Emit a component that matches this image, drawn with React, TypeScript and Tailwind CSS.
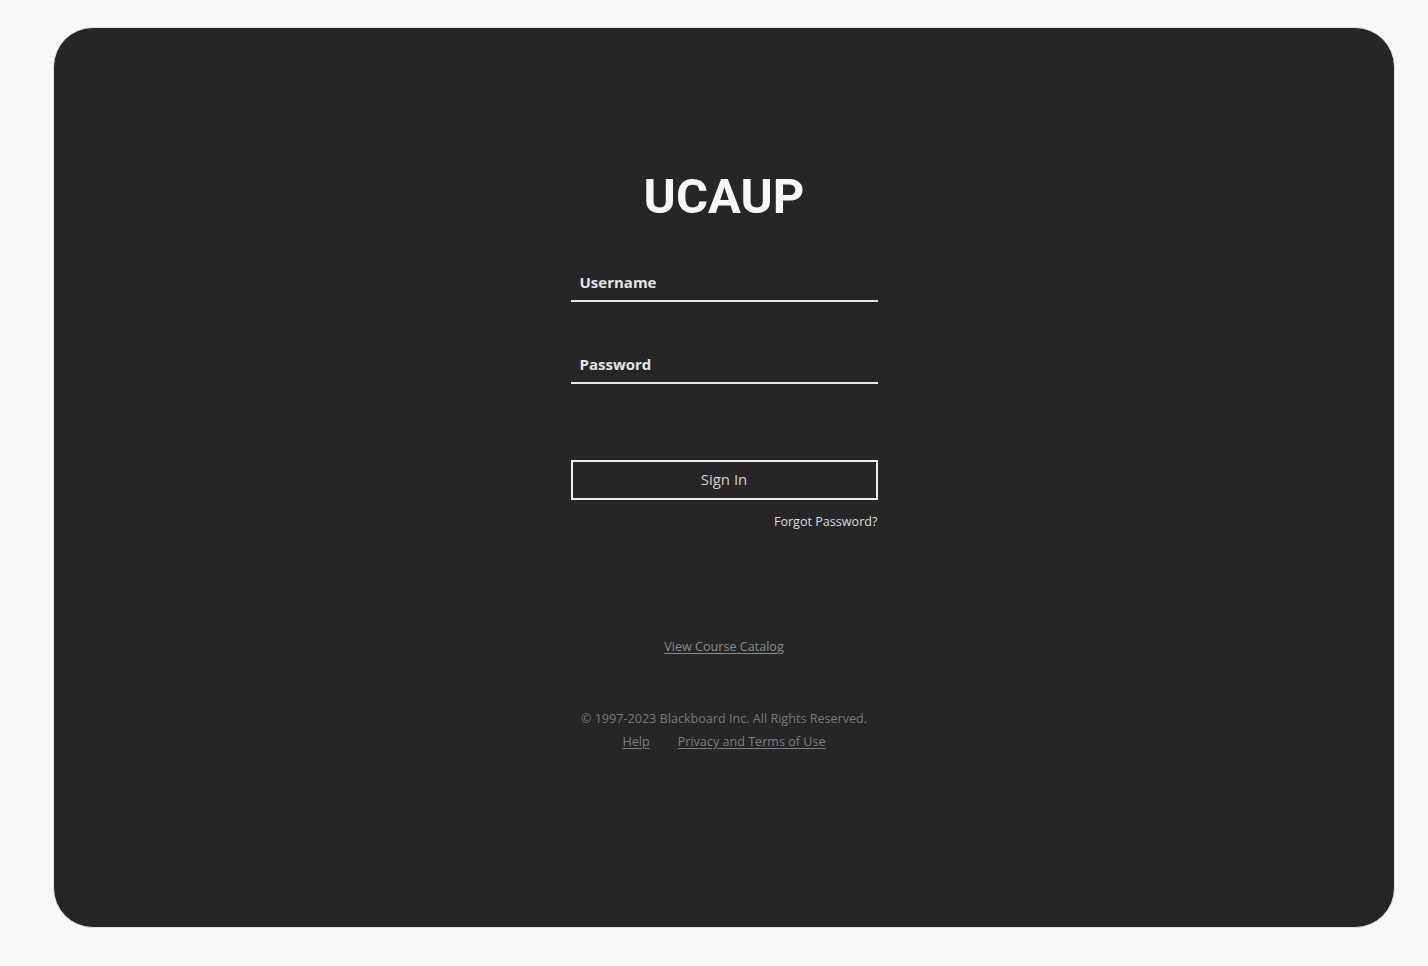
export default function App() {
  return (
    <div className="h-[966px] w-[1428px] overflow-hidden bg-[#f8f8f7] pt-[27px] pl-[53px]">
      <div className="flex h-[901px] w-[1342px] flex-col items-center rounded-[40px] border border-[#e2e2e2] bg-[#262626] pt-[144px] font-['Open_Sans',sans-serif]">
        <h1 className="font-['Roboto',sans-serif] text-[49px] leading-[49px] font-bold text-[#f7f7f7]">
          UCAUP
        </h1>

        <div className="mt-[51px] flex w-[307px] flex-col gap-[52px]">
          <div className="border-b-2 border-[#e6e6e6] pb-[8px] pl-[9px]">
            <span className="block text-[15px] leading-[20px] font-bold text-[#e4e4e4]">Username</span>
          </div>
          <div className="border-b-2 border-[#e6e6e6] pb-[8px] pl-[9px]">
            <span className="block text-[15px] leading-[20px] font-bold text-[#e4e4e4]">Password</span>
          </div>
        </div>

        <button className="mt-[76px] flex h-[40px] w-[307px] items-center justify-center border-2 border-[#ececec] pb-[1px] text-[15px] text-[#d2d2d2]">
          Sign In
        </button>
        <div className="mt-[13px] flex w-[307px] justify-end">
          <a className="text-[12.6px] leading-[18px] text-[#dcdcdc]">Forgot Password?</a>
        </div>

        <a className="mt-[107px] text-[12.6px] leading-[18px] text-[#8c8c8c] underline underline-offset-2">
          View Course Catalog
        </a>

        <p className="mt-[54px] text-[12.6px] leading-[18px] text-[#7a7a7a]">
          © 1997-2023 Blackboard Inc. All Rights Reserved.
        </p>
        <div className="mt-[5px] flex gap-[28px] text-[12.6px] leading-[18px] text-[#7f7f7f]">
          <a className="underline underline-offset-2">Help</a>
          <a className="underline underline-offset-2">Privacy and Terms of Use</a>
        </div>
      </div>
    </div>
  );
}
